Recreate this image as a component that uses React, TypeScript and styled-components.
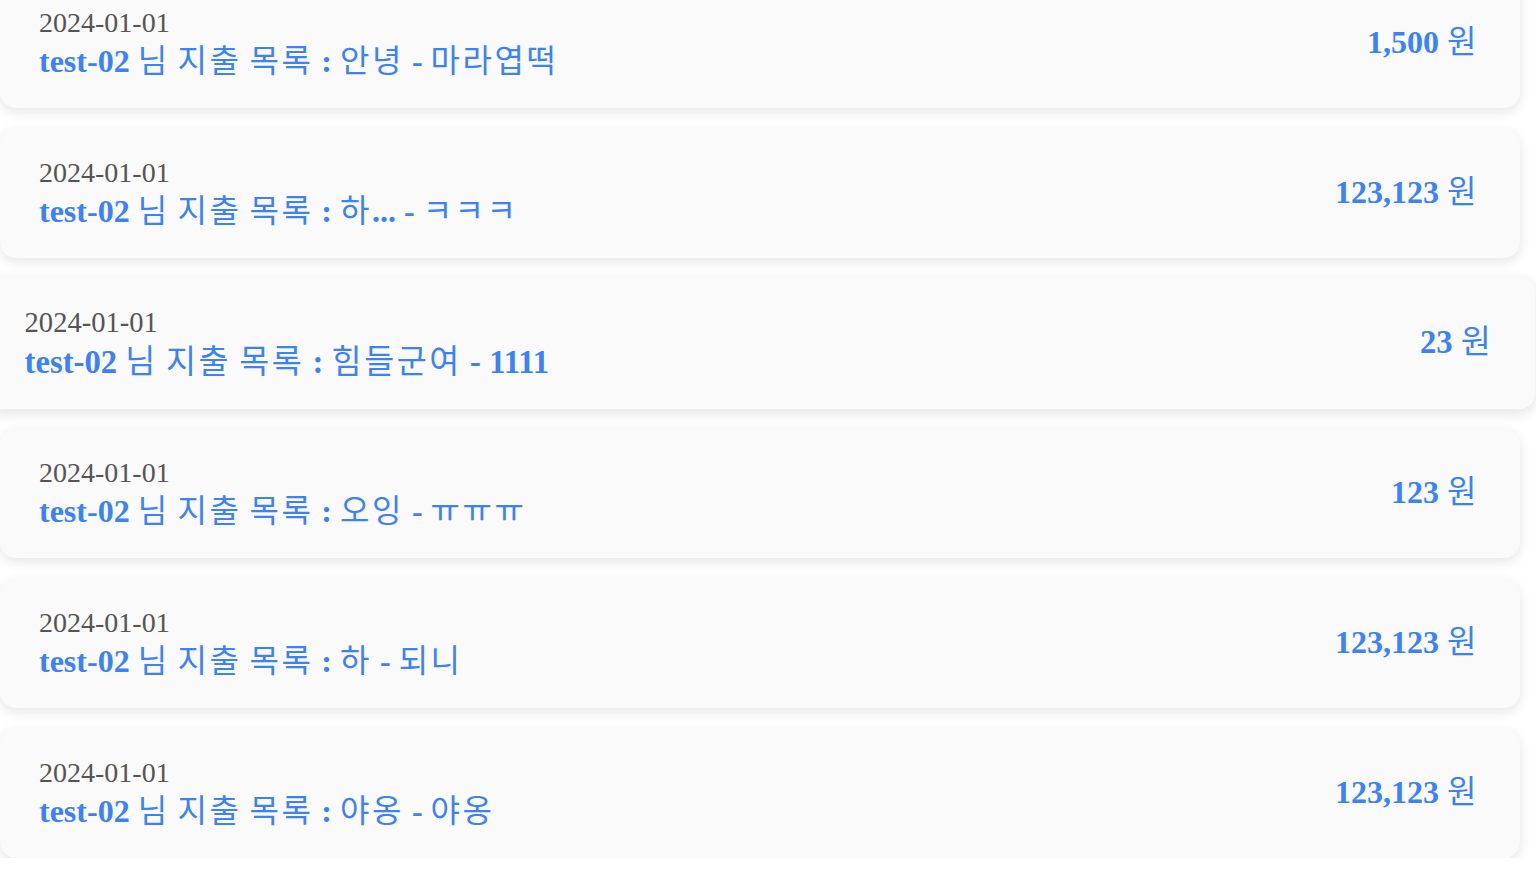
import React from 'react'
import styled, { createGlobalStyle } from 'styled-components'

interface Expense {
  date: string
  user: string
  category: string
  memo: string
  amount: number
  hovered?: boolean
}

const expenses: Expense[] = [
  { date: '2024-01-01', user: 'test-02', category: '안녕', memo: '마라엽떡', amount: 1500 },
  { date: '2024-01-01', user: 'test-02', category: '하...', memo: 'ㅋㅋㅋ', amount: 123123 },
  { date: '2024-01-01', user: 'test-02', category: '힘들군여', memo: '1111', amount: 23, hovered: true },
  { date: '2024-01-01', user: 'test-02', category: '오잉', memo: 'ㅠㅠㅠ', amount: 123 },
  { date: '2024-01-01', user: 'test-02', category: '하', memo: '되니', amount: 123123 },
  { date: '2024-01-01', user: 'test-02', category: '야옹', memo: '야옹', amount: 123123 }
]

const HANGUL = /([\u3131-\u318e\uac00-\ud7a3]+)/

// hangul runs come out in the regular weight, the rest stays bold
const Mixed: React.FC<{ text: string }> = ({ text }) => {
  const parts = text.split(HANGUL)
  return (
    <>
      {parts.map((p, i) =>
        i % 2 === 1 ? <Hangul key={i}>{p}</Hangul> : <React.Fragment key={i}>{p}</React.Fragment>
      )}
    </>
  )
}

const App: React.FC = () => {
  return (
    <>
      <GlobalStyle />
      <List>
        {expenses.map((e, i) => (
          <Card key={i} $hovered={e.hovered}>
            <Info>
              <DateText>{e.date}</DateText>
              <Title>
                <Mixed text={`${e.user} 님 지출 목록 : ${e.category} - ${e.memo}`} />
              </Title>
            </Info>
            <Amount>
              <Mixed text={`${e.amount.toLocaleString('en-US')} 원`} />
            </Amount>
          </Card>
        ))}
      </List>
    </>
  )
}

const GlobalStyle = createGlobalStyle`
  html, body {
    margin: 0;
    padding: 0;
    background: #ffffff;
    overflow: hidden;
  }
  body {
    font-family: 'Liberation Serif', 'Noto Sans CJK KR', serif;
  }
`

const List = styled.div`
  display: flex;
  flex-direction: column;
  gap: 20px;
  margin-top: -22px;
  padding-right: 16px;
`

const Card = styled.div<{ $hovered?: boolean }>`
  display: flex;
  justify-content: space-between;
  align-items: center;
  height: 130px;
  box-sizing: border-box;
  padding: 0 41px 0 39px;
  background: #fafafa;
  border-radius: 16px;
  box-shadow: 0 4px 12px rgba(0, 0, 0, 0.1);
  transform: ${(p) => (p.$hovered ? 'scale(1.02)' : 'none')};
`

const Info = styled.div`
  display: flex;
  flex-direction: column;
`

const DateText = styled.div`
  font-size: 28px;
  line-height: 32px;
  color: #555555;
`

const Title = styled.div`
  font-size: 32px;
  line-height: 38px;
  font-weight: 700;
  color: #3b82f6;
`

const Amount = styled.div`
  font-size: 32px;
  line-height: 38px;
  font-weight: 700;
  color: #3b82f6;
  margin-bottom: 6px;
`

const Hangul = styled.span`
  font-family: 'Noto Sans CJK KR', sans-serif;
  font-weight: 400;
  letter-spacing: 2.5px;
`

export default App
